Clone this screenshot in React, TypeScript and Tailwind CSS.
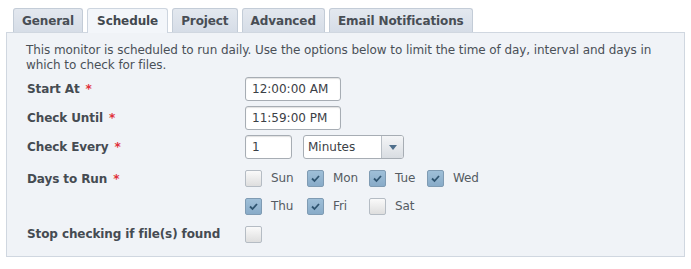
import React from 'react'

const font = { fontFamily: '"DejaVu Sans", Verdana, sans-serif' }

const tabs = ['General', 'Schedule', 'Project', 'Advanced', 'Email Notifications']

function Check({ on }: { on: boolean }) {
  return (
    <span
      className={
        'inline-flex h-[17px] w-[17px] items-center justify-center rounded-[2px] border ' +
        (on
          ? 'border-[#7f9bb3] bg-gradient-to-b from-[#9fbfd8] to-[#88abc8]'
          : 'border-[#b5bcc4] bg-gradient-to-b from-[#fafafa] to-[#dedede]')
      }
    >
      {on && (
        <svg width="11" height="9" viewBox="0 0 11 9">
          <path d="M2 4.5 L4.5 7 L9 2" fill="none" stroke="#2f5470" strokeWidth="1.8" />
        </svg>
      )}
    </span>
  )
}

function Day({ name, on, w }: { name: string; on: boolean; w: string }) {
  return (
    <div className={'flex items-center gap-[9px] ' + w}>
      <Check on={on} />
      <span className="text-[12px] tracking-[-0.1px] text-[#555b62]">{name}</span>
    </div>
  )
}

function Label({ text, req = true }: { text: string; req?: boolean }) {
  return (
    <div className="w-[218px] shrink-0 text-[12px] font-bold tracking-[-0.1px] text-[#454b52]">
      {text}
      {req && <span className="ml-[6px] text-[#e0303a]">*</span>}
    </div>
  )
}

function TimeInput({ value, w }: { value: string; w: string }) {
  return (
    <div
      className={
        'flex h-[24px] items-center rounded-[3px] border border-[#a7adb4] bg-white px-[6px] text-[12px] text-[#3b4046] shadow-[inset_0_1px_1px_rgba(0,0,0,0.12)] ' +
        w
      }
    >
      {value}
    </div>
  )
}

export default function App() {
  return (
    <div className="h-[269px] w-[691px] bg-white pt-[8px]" style={font}>
      <div className="flex items-end gap-[4px] pl-[13px]">
        {tabs.map((t) => {
          const active = t === 'Schedule'
          return (
            <div
              key={t}
              className={
                'flex items-center rounded-t-[3px] border border-b-0 text-[12px] font-bold tracking-[-0.1px] ' +
                (active
                  ? 'relative z-10 -mb-px h-[25px] border-[#cdd5df] bg-[#f3f6fa] px-[9px] text-[#42484f]'
                  : 'h-[24px] border-[#c3ccd7] bg-gradient-to-b from-[#e3e8ef] to-[#d6dde7] px-[8px] text-[#484e55]')
              }
            >
              {t}
            </div>
          )
        })}
      </div>
      <div className="mx-[6px] h-[225px] border border-[#d0d7e0] bg-[#f0f3f7] pl-[19px] pt-[10px]">
        <p className="w-[640px] text-[12px] leading-[15px] tracking-[-0.08px] text-[#4a5057]">
          This monitor is scheduled to run daily. Use the options below to limit the time of day, interval and days in
          which to check for files.
        </p>
        <div className="mt-[4px] flex items-center pl-[1px]">
          <Label text="Start At" />
          <TimeInput value="12:00:00 AM" w="w-[96px]" />
        </div>
        <div className="mt-[5px] flex items-center pl-[1px]">
          <Label text="Check Until" />
          <TimeInput value="11:59:00 PM" w="w-[96px]" />
        </div>
        <div className="mt-[5px] flex items-center pl-[1px]">
          <Label text="Check Every" />
          <TimeInput value="1" w="w-[47px]" />
          <div className="ml-[11px] flex h-[24px] w-[101px] items-stretch rounded-[3px] border border-[#a7adb4] bg-white text-[12px] text-[#3b4046]">
            <div className="flex flex-1 items-center px-[4px]">Minutes</div>
            <div className="flex w-[22px] items-center justify-center rounded-r-[2px] border-l border-[#b9bfc6] bg-gradient-to-b from-[#f4f5f7] to-[#d9dde2]">
              <svg width="8" height="5" viewBox="0 0 8 5">
                <path d="M0 0 H8 L4 5 Z" fill="#4f6f8c" />
              </svg>
            </div>
          </div>
        </div>
        <div className="mt-[10px] flex items-start pl-[1px]">
          <div className="pt-[1px]">
            <Label text="Days to Run" />
          </div>
          <div className="flex flex-col gap-[10px]">
            <div className="flex">
              <Day name="Sun" on={false} w="w-[62px]" />
              <Day name="Mon" on={true} w="w-[62px]" />
              <Day name="Tue" on={true} w="w-[58px]" />
              <Day name="Wed" on={true} w="w-[60px]" />
            </div>
            <div className="flex">
              <Day name="Thu" on={true} w="w-[62px]" />
              <Day name="Fri" on={true} w="w-[62px]" />
              <Day name="Sat" on={false} w="w-[58px]" />
            </div>
          </div>
        </div>
        <div className="mt-[10px] flex items-center pl-[1px]">
          <Label text="Stop checking if file(s) found" req={false} />
          <Check on={false} />
        </div>
      </div>
    </div>
  )
}
